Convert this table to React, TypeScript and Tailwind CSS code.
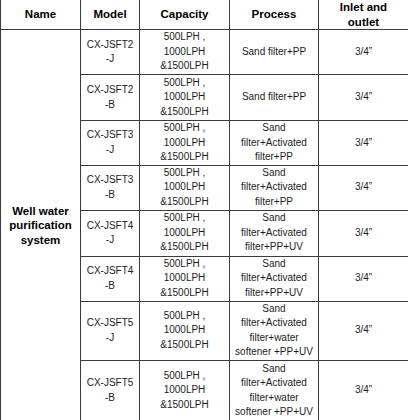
import React from "react";

type Row = {
  model: [string, string];
  process: string[];
  h: string;
};

const rows: Row[] = [
  { model: ["CX-JSFT2", "-J"], process: ["Sand filter+PP"], h: "h-[45px]" },
  { model: ["CX-JSFT2", "-B"], process: ["Sand filter+PP"], h: "h-[46px]" },
  { model: ["CX-JSFT3", "-J"], process: ["Sand", "filter+Activated", "filter+PP"], h: "h-[44px]" },
  { model: ["CX-JSFT3", "-B"], process: ["Sand", "filter+Activated", "filter+PP"], h: "h-[45px]" },
  { model: ["CX-JSFT4", "-J"], process: ["Sand", "filter+Activated", "filter+PP+UV"], h: "h-[46px]" },
  { model: ["CX-JSFT4", "-B"], process: ["Sand", "filter+Activated", "filter+PP+UV"], h: "h-[45px]" },
  {
    model: ["CX-JSFT5", "-J"],
    process: ["Sand", "filter+Activated", "filter+water", "softener +PP+UV"],
    h: "h-[59px]",
  },
  {
    model: ["CX-JSFT5", "-B"],
    process: ["Sand", "filter+Activated", "filter+water", "softener +PP+UV"],
    h: "h-[61px]",
  },
];

const cell = "border border-[#3a3a3a] p-0 text-center align-middle";

function Lines({ items }: { items: string[] }) {
  return (
    <>
      {items.map((t, i) => (
        <div key={i} className="whitespace-nowrap">
          {t}
        </div>
      ))}
    </>
  );
}

export default function App() {
  return (
    <div className="w-[408px] h-[420px] overflow-hidden bg-white font-['Liberation_Sans',Arial,sans-serif]">
      <table className="w-[408px] table-fixed border-collapse text-[10px] leading-[14.5px] text-[#1c1c1c]">
        <colgroup>
          <col className="w-[80px]" />
          <col className="w-[59px]" />
          <col className="w-[90px]" />
          <col className="w-[89px]" />
          <col className="w-[90px]" />
        </colgroup>
        <thead>
          <tr className="h-[29px] text-[11.5px] font-bold text-black">
            <th className={`${cell} border-t-0`}>Name</th>
            <th className={`${cell} border-t-0`}>Model</th>
            <th className={`${cell} border-t-0`}>Capacity</th>
            <th className={`${cell} border-t-0`}>Process</th>
            <th className={`${cell} border-t-0`}>
              <div>Inlet and</div>
              <div>outlet</div>
            </th>
          </tr>
        </thead>
        <tbody>
          {rows.map((r, i) => (
            <tr key={i} className={r.h}>
              {i === 0 && (
                <td
                  rowSpan={rows.length}
                  className={`${cell} text-[11.5px] font-bold text-black`}
                >
                  <div>Well water</div>
                  <div>purification</div>
                  <div>system</div>
                </td>
              )}
              <td className={cell}>
                <Lines items={r.model} />
              </td>
              <td className={cell}>
                <Lines items={["500LPH ,", "1000LPH", "&1500LPH"]} />
              </td>
              <td className={cell}>
                <Lines items={r.process} />
              </td>
              <td className={cell}>3/4”</td>
            </tr>
          ))}
        </tbody>
      </table>
    </div>
  );
}
